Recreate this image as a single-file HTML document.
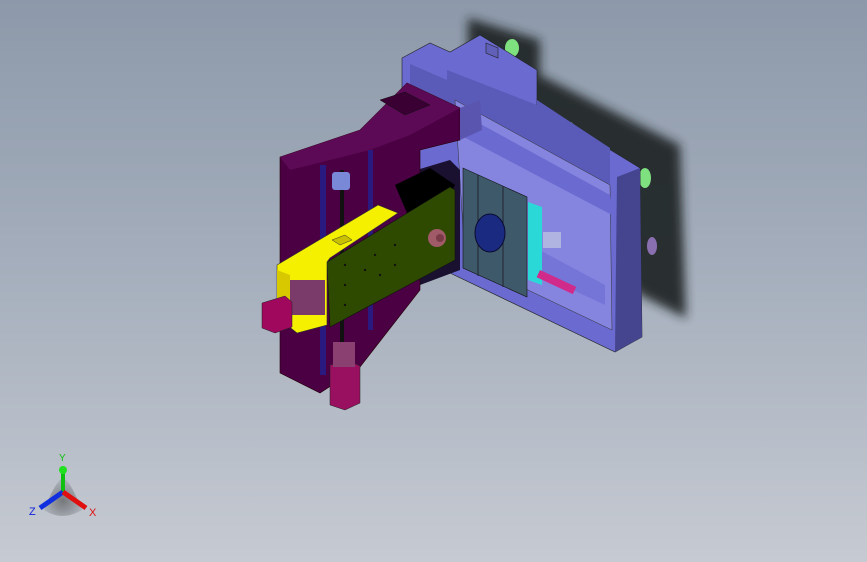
<!DOCTYPE html>
<html><head><meta charset="utf-8"><style>
html,body{margin:0;padding:0;width:867px;height:562px;overflow:hidden}
body{background:linear-gradient(#8d99aa 0%,#a3adbb 45%,#c6cad2 100%)}
svg{position:absolute;left:0;top:0}
</style></head><body>
<svg width="867" height="562" viewBox="0 0 867 562" xmlns="http://www.w3.org/2000/svg">
<defs><filter id="b" x="-20%" y="-20%" width="140%" height="140%"><feGaussianBlur stdDeviation="5"/></filter>
<radialGradient id="tri" cx="50%" cy="60%" r="50%"><stop offset="0" stop-color="#444"/><stop offset="1" stop-color="#9aa0a8"/></radialGradient></defs>
<!-- shadow -->
<polygon points="468,18 540,40 540,75 680,145 686,318 640,295 600,260 520,150 468,95" fill="#1c2024" opacity=".9" filter="url(#b)"/>
<!-- green knobs -->
<ellipse cx="512" cy="48" rx="7" ry="9" fill="#7fe07f"/><ellipse cx="645" cy="178" rx="6" ry="10" fill="#7fe07f"/>
<ellipse cx="570" cy="127" rx="4" ry="5" fill="#7fe07f"/><ellipse cx="652" cy="246" rx="5" ry="9" fill="#8a6fb0"/>
<!-- blue box -->
<polygon points="402,58 430,43 450,52 480,35 537,70 537,105 640,168 642,337 615,352 402,250" fill="#6a6ad0" stroke="#222" stroke-width=".6"/>
<polygon points="410,64 447,80 447,70 537,105 537,100 610,148 610,190 410,90" fill="#5a5ab8"/>
<polygon points="617,177 640,168 642,337 615,352" fill="#45458f"/>
<polygon points="455,100 610,185 612,330 465,260" fill="#8585e0" stroke="#333" stroke-width=".5"/>
<polygon points="455,110 610,195 612,215 460,135" fill="#6a6ad0"/>
<polygon points="530,245 605,285 605,305 530,270" fill="#7575d8"/>
<polygon points="486,43 498,48 498,58 486,53" fill="#6060b8" stroke="#222" stroke-width=".6"/>
<!-- dark interior -->
<polygon points="400,175 450,160 460,170 460,270 420,285 400,250" fill="#1a1030"/>
<polygon points="405,185 430,175 440,210 415,210" fill="#b8b0ea"/>
<!-- purple column -->
<polygon points="280,157 360,130 407,83 460,108 460,140 420,150 420,290 360,367 320,393 280,373" fill="#4a0042" stroke="#200" stroke-width=".6"/>
<polygon points="280,157 360,130 407,83 460,108 410,135 370,150 290,170" fill="#5c0a55"/>
<polygon points="380,100 405,92 430,105 405,115" fill="#3a0034" stroke="#111" stroke-width=".5"/>
<polygon points="460,108 480,100 482,130 460,140" fill="#5a56b0"/>
<rect x="320" y="165" width="6" height="210" fill="#2a1a80"/><rect x="368" y="150" width="5" height="180" fill="#2a1a80"/>
<rect x="340" y="170" width="4" height="200" fill="#111"/>
<rect x="332" y="172" width="18" height="18" rx="3" fill="#7a88d8"/>
<!-- black cylinder -->
<polygon points="395,185 430,168 455,185 440,215 410,220" fill="#000"/>
<!-- slider plate -->
<polygon points="463,168 527,197 527,297 463,268" fill="#3e5a6a" stroke="#111" stroke-width=".6"/>
<line x1="478" y1="175" x2="478" y2="276" stroke="#223"/><line x1="503" y1="186" x2="503" y2="287" stroke="#223"/>
<ellipse cx="490" cy="233" rx="15" ry="19" fill="#1a2a80" stroke="#0a0a30"/>
<polygon points="528,202 542,207 542,285 528,280" fill="#2ad8d8"/>
<rect x="543" y="232" width="18" height="16" fill="#b0b4e0"/>
<rect x="540" y="270" width="40" height="8" fill="#d02a8a" transform="rotate(25 540 270)"/>
<!-- green plate -->
<polygon points="327,262 450,187 455,190 455,260 330,327" fill="#2e4a00" stroke="#111" stroke-width=".6"/>
<circle cx="437" cy="238" r="9" fill="#a05a68"/><circle cx="440" cy="238" r="4" fill="#7a3a48"/>
<g fill="#111"><circle cx="345" cy="265" r="1.2"/><circle cx="345" cy="285" r="1.2"/><circle cx="365" cy="270" r="1.2"/><circle cx="375" cy="255" r="1.2"/><circle cx="395" cy="245" r="1.2"/><circle cx="395" cy="265" r="1.2"/><circle cx="345" cy="305" r="1.2"/><circle cx="380" cy="275" r="1.2"/></g>
<!-- yellow beam -->
<polygon points="277,265 378,205 398,213 330,258 327,262 327,325 297,333 277,317" fill="#f5f000" stroke="#333" stroke-width=".6"/>
<polygon points="277,270 290,275 290,315 277,310" fill="#d8c800"/>
<polygon points="332,240 345,235 352,240 340,245" fill="#c8c000" stroke="#333" stroke-width=".5"/>
<rect x="290" y="280" width="35" height="35" fill="#7a3a6a"/>
<!-- magenta motors -->
<polygon points="262,303 285,296 292,302 292,327 275,333 262,328" fill="#a0085e" stroke="#222" stroke-width=".5"/>
<polygon points="330,365 348,360 360,366 360,403 345,410 330,405" fill="#9a1060" stroke="#222" stroke-width=".5"/>
<rect x="333" y="342" width="22" height="25" fill="#8a4070"/>
<!-- axis triad -->
<path d="M44,510 Q56,480 63,478 Q70,480 82,510 Q62,522 44,510Z" fill="url(#tri)" opacity=".6"/>
<line x1="63" y1="492" x2="63" y2="472" stroke="#10c010" stroke-width="4"/>
<circle cx="63" cy="470" r="4" fill="#20e020"/>
<line x1="63" y1="492" x2="40" y2="508" stroke="#1030e0" stroke-width="5"/>
<line x1="63" y1="492" x2="86" y2="508" stroke="#e01010" stroke-width="5"/>
<text x="59" y="461" font-family="Liberation Sans,sans-serif" font-size="10" fill="#10c010">Y</text>
<text x="29" y="515" font-family="Liberation Sans,sans-serif" font-size="11" fill="#1020e0">Z</text>
<text x="89" y="516" font-family="Liberation Sans,sans-serif" font-size="11" fill="#e01010">X</text>
</svg>
</body></html>
